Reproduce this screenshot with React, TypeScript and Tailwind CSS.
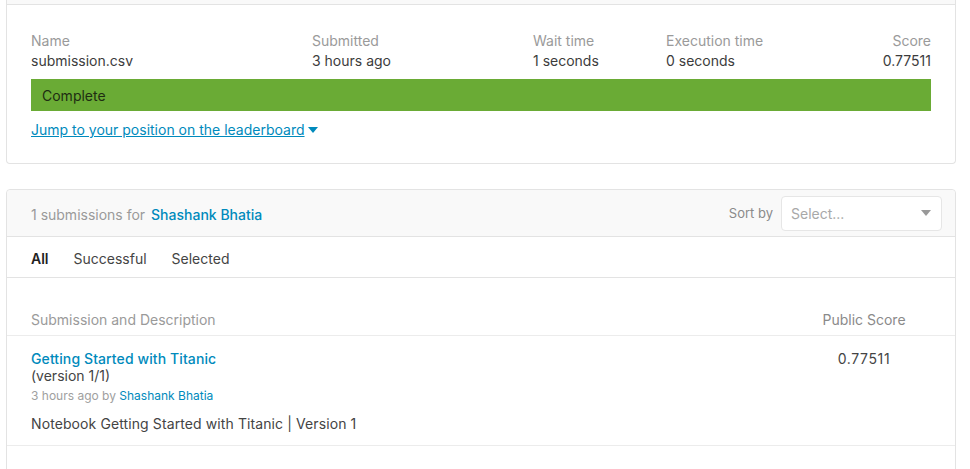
import React from 'react';

// ─── Small pieces ─────────────────────────────────────────────────────────────

function Caret({ className }: { className?: string }) {
  return (
    <svg width="10" height="6" viewBox="0 0 10 6" className={className}>
      <path d="M0 0h10L5 6z" fill="currentColor" />
    </svg>
  );
}

function Stat({ label, value, className }: { label: string; value: string; className?: string }) {
  return (
    <div className={className}>
      <p className="text-[14px] leading-5 text-[#9a9a9a]">{label}</p>
      <p className="text-[14px] leading-5 text-[#3c3c3c]">{value}</p>
    </div>
  );
}

// ─── Submission result card ───────────────────────────────────────────────────

function ResultCard() {
  return (
    <div className="ml-[6px] mr-[14px] rounded-b-[4px] border border-t-0 border-[#e3e3e3] bg-white">
      <div className="h-[5px] bg-[#f9f9f9] border-b border-[#e3e3e3]" />
      <div className="px-[24px] pt-[26px] pb-[22px]">
        <div className="flex">
          <Stat label="Name" value="submission.csv" className="w-[281px]" />
          <Stat label="Submitted" value="3 hours ago" className="w-[221px]" />
          <Stat label="Wait time" value="1 seconds" className="w-[133px]" />
          <Stat label="Execution time" value="0 seconds" className="flex-1" />
          <Stat label="Score" value="0.77511" className="text-right" />
        </div>
        <div className="mt-[8px] h-[32px] bg-[#6aab35] flex items-center px-[11px] text-[14px] text-[#1e2d12]">
          Complete
        </div>
        <a className="mt-[9px] inline-flex items-center gap-[3px] text-[14px] leading-5 text-[#008abc] underline">
          Jump to your position on the leaderboard
          <Caret className="text-[#008abc]" />
        </a>
      </div>
    </div>
  );
}

// ─── Submissions list card ────────────────────────────────────────────────────

function SubmissionsCard() {
  const tabs = ['All', 'Successful', 'Selected'];

  return (
    <div className="mt-[25px] ml-[6px] mr-[14px] rounded-[4px] border border-[#e3e3e3] bg-white">
      <div className="h-[47px] bg-[#f9f9f9] border-b border-[#e3e3e3] rounded-t-[4px] flex items-center justify-between pl-[24px] pr-[13px]">
        <p className="pt-[2px] text-[14px] text-[#9a9a9a]">
          1 submissions for <span className="ml-[2px] font-medium text-[#008abc]">Shashank Bhatia</span>
        </p>
        <div className="flex items-center gap-[8px]">
          <span className="pt-[2px] text-[13px] text-[#8a8a8a]">Sort by</span>
          <div className="w-[161px] h-[35px] rounded-[4px] border border-[#e6e6e6] bg-white flex items-center justify-between pl-[9px] pr-[10px]">
            <span className="text-[14px] text-[#a8a8a8]">Select...</span>
            <Caret className="text-[#999999]" />
          </div>
        </div>
      </div>

      <div className="h-[41px] border-b border-[#e3e3e3] flex items-center pl-[24px] pt-[2px] gap-[25px]">
        {tabs.map((t, i) => (
          <span key={t} className={`text-[14px] ${i === 0 ? 'font-semibold text-[#222222]' : 'text-[#444444]'}`}>{t}</span>
        ))}
      </div>

      <div className="flex items-end pl-[24px] pr-[49px] pt-[32px] pb-[5px] border-b border-[#ececec]">
        <span className="flex-1 text-[14px] leading-5 text-[#9a9a9a]">Submission and Description</span>
        <span className="w-[84px] text-center text-[14px] leading-5 text-[#8a8a8a]">Public Score</span>
      </div>

      <div className="flex pl-[24px] pr-[49px] pt-[14px] pb-[11px] border-b border-[#ececec]">
        <div className="flex-1">
          <a className="block text-[14px] leading-[17px] font-medium tracking-[0.1px] text-[#008abc]">Getting Started with Titanic</a>
          <p className="text-[14px] leading-[17px] text-[#444444]">(version 1/1)</p>
          <p className="mt-[4px] text-[12px] leading-4 text-[#a0a0a0]">
            3 hours ago by <span className="text-[#008abc]">Shashank Bhatia</span>
          </p>
          <p className="mt-[10px] text-[14px] leading-5 tracking-[0.1px] text-[#444444]">Notebook Getting Started with Titanic | Version 1</p>
        </div>
        <div className="w-[84px] text-center text-[14px] leading-[17px] tracking-[0.6px] text-[#444444]">0.77511</div>
      </div>

      <div className="h-[80px]" />
    </div>
  );
}

// ─── Page ─────────────────────────────────────────────────────────────────────

export default function App() {
  return (
    <div className="min-h-screen bg-white" style={{ fontFamily: 'Inter, "Noto Sans", sans-serif' }}>
      <ResultCard />
      <SubmissionsCard />
    </div>
  );
}
